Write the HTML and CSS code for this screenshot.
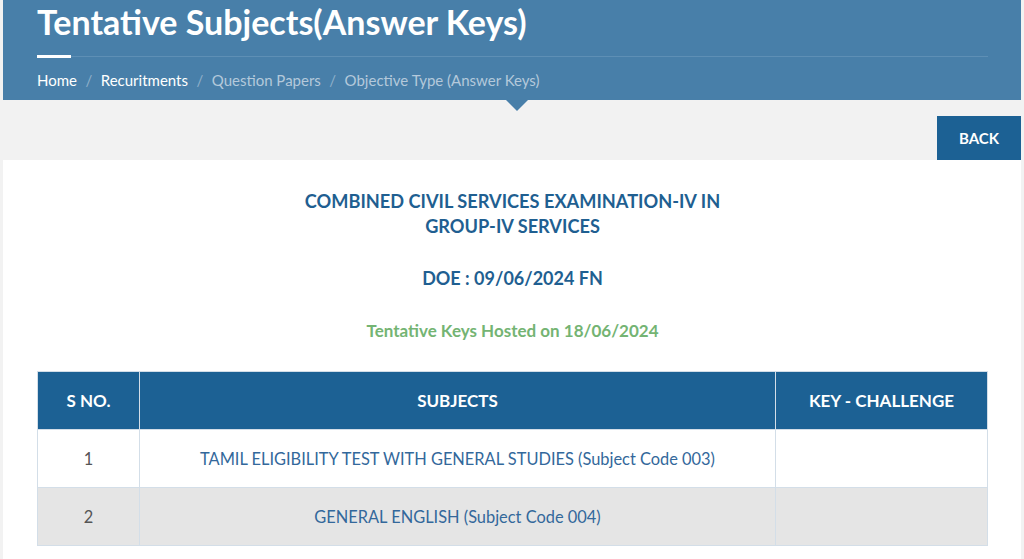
FILE: index.html
```html
<!DOCTYPE html>
<html lang="en">
<head>
  <meta charset="UTF-8">
  <title>Tentative Subjects(Answer Keys)</title>
  <link rel="stylesheet" href="styles.css">
</head>
<body>
  <div class="page-header">
    <div class="container">
      <h1>Tentative Subjects(Answer Keys)</h1>
      <div class="rule"><span></span></div>
      <ul class="crumbs">
        <li><a href="#">Home</a></li>
        <li><a href="#">Recuritments</a></li>
        <li class="muted">Question Papers</li>
        <li class="muted">Objective Type (Answer Keys)</li>
      </ul>
    </div>
    <div class="caret"></div>
  </div>

  <div class="toolbar">
    <a class="back" href="#">BACK</a>
  </div>

  <div class="content">
    <div class="container">
      <h2>COMBINED CIVIL SERVICES EXAMINATION-IV IN<br>GROUP-IV SERVICES</h2>
      <h3>DOE : 09/06/2024 FN</h3>
      <p class="hosted">Tentative Keys Hosted on 18/06/2024</p>

      <table class="keys">
        <thead>
          <tr>
            <th class="sno">S NO.</th>
            <th>SUBJECTS</th>
            <th class="chal">KEY - CHALLENGE</th>
          </tr>
        </thead>
        <tbody>
          <tr>
            <td class="sno">1</td>
            <td><a href="#">TAMIL ELIGIBILITY TEST WITH GENERAL STUDIES (Subject Code 003)</a></td>
            <td></td>
          </tr>
          <tr>
            <td class="sno">2</td>
            <td><a href="#">GENERAL ENGLISH (Subject Code 004)</a></td>
            <td></td>
          </tr>
        </tbody>
      </table>
    </div>
  </div>
</body>
</html>
```

FILE: styles.css
```css
body {
  margin: 0;
  padding: 0 3px;
  background-color: #f2f2f2;
  font-family: Lato, "Open Sans", sans-serif;
  color: #555;
}
a {
  text-decoration: none;
}
.container {
  margin: 0 33px 0 34px;
}
.page-header {
  position: relative;
  height: 100px;
  background-color: #487fa9;
  color: white;
}
.page-header h1 {
  margin: 0;
  padding-top: 1px;
  font-size: 34px;
  line-height: 42px;
  font-weight: 700;
}
.rule {
  margin-top: 12px;
  height: 3px;
  display: flex;
  align-items: center;
  background: linear-gradient(#5e8fb5, #5e8fb5) no-repeat left center / 100% 1px;
}
.rule span {
  width: 34px;
  height: 3px;
  background-color: white;
}
.crumbs {
  list-style: none;
  margin: 10px 0 0;
  padding: 0;
  display: flex;
  font-size: 15px;
  line-height: 24px;
}
.crumbs li + li::before {
  content: "/";
  margin: 0 8.5px;
  color: #8fb0ca;
}
.crumbs a {
  color: white;
}
.crumbs .muted {
  color: #b4c9db;
}
.caret {
  position: absolute;
  left: 503px;
  bottom: -11px;
  width: 0;
  height: 0;
  border-left: 11px solid transparent;
  border-right: 11px solid transparent;
  border-top: 11px solid #487fa9;
}
.toolbar {
  height: 60px;
  display: flex;
  justify-content: flex-end;
  align-items: flex-end;
}
.back {
  width: 84px;
  height: 44px;
  display: flex;
  align-items: center;
  justify-content: center;
  background-color: #1c6194;
  color: white;
  font-weight: 700;
  font-size: 15px;
}
.content {
  background-color: white;
  padding: 29px 0 40px;
}
.content h2 {
  margin: 0;
  text-align: center;
  color: #1f5f91;
  font-size: 18.2px;
  line-height: 25px;
  font-weight: 700;
}
.content h3 {
  margin: 27px 0 0;
  text-align: center;
  color: #1f5f91;
  font-size: 18px;
  line-height: 25px;
  font-weight: 700;
}
.hosted {
  margin: 29px 0 0;
  text-align: center;
  color: #74b473;
  font-size: 17px;
  line-height: 22px;
  font-weight: 700;
}
.keys {
  margin-top: 29px;
  width: 100%;
  border-collapse: collapse;
  font-size: 16.4px;
}
.keys th, .keys td {
  border: 1px solid #d3dee8;
  height: 57px;
  padding: 0 10px;
  text-align: center;
}
.keys th {
  background-color: #1c6194;
  color: white;
  font-weight: 700;
  font-size: 17px;
}
.keys .sno {
  width: 81px;
}
.keys .chal {
  width: 191px;
}
.keys tbody tr:nth-child(2) td {
  background-color: #e5e5e5;
}
.keys td a {
  color: #33689b;
}
```
